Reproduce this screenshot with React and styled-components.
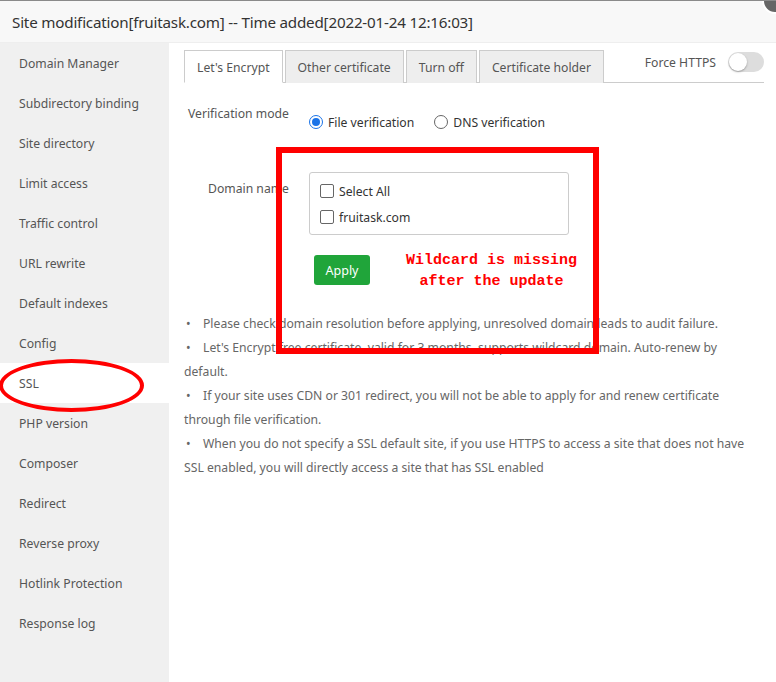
import React, { useState } from "react";
import styled, { createGlobalStyle } from "styled-components";

const GlobalStyle = createGlobalStyle`
  html, body {
    margin: 0;
    padding: 0;
    background: #fff;
    font-family: "Noto Sans", "Open Sans", Arial, sans-serif;
  }
  * { box-sizing: border-box; }
`;

const Layer = styled.div`
  position: relative;
  width: 776px;
  height: 682px;
  overflow: hidden;
  background: #fff;
  border-top: 1px solid #8a8a8a;
`;

const Header = styled.div`
  height: 42px;
  padding: 0 12px;
  display: flex;
  align-items: center;
  background: #f8f8f8;
  border-bottom: 1px solid #eee;
  font-size: 15.2px;
  color: #333;
  letter-spacing: -0.2px;
`;

const CloseBtn = styled.div`
  position: absolute;
  top: -13px;
  right: -12px;
  width: 26px;
  height: 26px;
  border-radius: 50%;
  background: #666;
  border: 2px solid #fff;
`;

const Body = styled.div`
  display: flex;
  height: 639px;
`;

const Sidebar = styled.ul`
  width: 169px;
  margin: 0;
  padding: 0;
  list-style: none;
  background: #f0f0f0;
`;

const NavItem = styled.li`
  height: 40px;
  padding: 1px 0 0 19px;
  line-height: 39px;
  font-size: 12.2px;
  color: #555;
  background: ${(p) => (p.$active ? "#fff" : "transparent")};
`;

const Main = styled.div`
  flex: 1;
  padding: 7px 12px 0 15px;
`;

const TabBar = styled.div`
  display: flex;
  align-items: flex-end;
  height: 33px;
  border-bottom: 1px solid #ccc;
  width: 580px;
  position: relative;
`;

const Tab = styled.div`
  height: 33px;
  line-height: 33px;
  padding: 0 12px;
  margin-right: 2px;
  font-size: 12.2px;
  color: #555;
  border: 1px solid #ccc;
  border-bottom: ${(p) => (p.$active ? "1px solid #fff" : "none")};
  background: ${(p) => (p.$active ? "#fff" : "#eee")};
  margin-bottom: -1px;
`;

const ForceBox = styled.div`
  position: absolute;
  right: 0;
  top: 2px;
  display: flex;
  align-items: center;
  gap: 12px;
  font-size: 12.2px;
  color: #555;
`;

const Switch = styled.div`
  width: 36px;
  height: 20px;
  border-radius: 10px;
  background: #ddd;
  position: relative;
  &::after {
    content: "";
    position: absolute;
    left: 1px;
    top: 1px;
    width: 18px;
    height: 18px;
    border-radius: 50%;
    background: #fff;
    box-shadow: 0 1px 2px rgba(0, 0, 0, 0.3);
  }
`;

const Form = styled.div`
  padding-top: 22px;
`;

const Row = styled.div`
  display: flex;
  align-items: flex-start;
  margin-bottom: ${(p) => p.$gap || 0}px;
`;

const Label = styled.div`
  width: ${(p) => (p.$auto ? "auto" : "105px")};
  margin-left: ${(p) => (p.$auto ? "4px" : "0")};
  text-align: right;
  font-size: 12.2px;
  color: #555;
  padding-top: ${(p) => p.$pt || 0}px;
`;

const RadioGroup = styled.div`
  display: flex;
  gap: 20px;
  margin-left: 20px;
  padding-top: 9px;
`;

const Option = styled.label`
  display: flex;
  align-items: center;
  gap: 5px;
  height: 16px;
  font-size: 12.2px;
  color: #333;
`;

const Radio = styled.span`
  width: 14px;
  height: 14px;
  border-radius: 50%;
  border: 1px solid ${(p) => (p.$on ? "#1a73e8" : "#666")};
  position: relative;
  &::after {
    content: "";
    display: ${(p) => (p.$on ? "block" : "none")};
    position: absolute;
    inset: 2px;
    border-radius: 50%;
    background: #1a73e8;
  }
`;

const DomainBox = styled.div`
  margin-left: 20px;
  width: 260px;
  height: 63px;
  border: 1px solid #ccc;
  border-radius: 3px;
  padding: 10px 10px;
  display: flex;
  flex-direction: column;
  gap: 10px;
`;

const Check = styled.span`
  width: 14px;
  height: 14px;
  border: 1px solid #666;
  border-radius: 2px;
`;

const ApplyRow = styled.div`
  display: flex;
  align-items: flex-start;
  padding-left: 130px;
  margin-top: 20px;
`;

const ApplyBtn = styled.button`
  width: 56px;
  height: 30px;
  border: none;
  border-radius: 3px;
  background: #20a53a;
  color: #fff;
  font-family: inherit;
  font-size: 12.5px;
`;

const Note = styled.div`
  margin-left: 36px;
  margin-top: -5px;
  font-family: "Liberation Mono", "DejaVu Sans Mono", monospace;
  font-weight: bold;
  font-size: 15px;
  line-height: 21px;
  color: #f00;
  text-align: center;
`;

const Tips = styled.ul`
  margin: 20px 0 0;
  padding: 0;
  list-style: none;
  font-size: 12.2px;
  line-height: 24px;
  color: #666;
  width: 570px;
`;

const Tip = styled.li`
  &::before {
    content: "•";
    display: inline-block;
    width: 17px;
    padding-left: 2px;
  }
`;

const RedRect = styled.div`
  position: absolute;
  left: 276px;
  top: 146px;
  width: 323px;
  height: 207px;
  border: 6px solid #f00;
  pointer-events: none;
`;

const RedOval = styled.div`
  position: absolute;
  left: -1px;
  top: 358px;
  width: 145px;
  height: 53px;
  border: 4px solid #f00;
  border-radius: 50%;
  pointer-events: none;
`;

const menu = [
  "Domain Manager",
  "Subdirectory binding",
  "Site directory",
  "Limit access",
  "Traffic control",
  "URL rewrite",
  "Default indexes",
  "Config",
  "SSL",
  "PHP version",
  "Composer",
  "Redirect",
  "Reverse proxy",
  "Hotlink Protection",
  "Response log",
];

const tabs = ["Let's Encrypt", "Other certificate", "Turn off", "Certificate holder"];

const tips = [
  "Please check domain resolution before applying, unresolved domain leads to audit failure.",
  "Let's Encrypt free certificate, valid for 3 months, supports wildcard domain. Auto-renew by default.",
  "If your site uses CDN or 301 redirect, you will not be able to apply for and renew certificate through file verification.",
  "When you do not specify a SSL default site, if you use HTTPS to access a site that does not have SSL enabled, you will directly access a site that has SSL enabled",
];

export default function App() {
  const [active, setActive] = useState("SSL");
  const [tab, setTab] = useState(0);

  return (
    <Layer>
      <GlobalStyle />
      <Header>Site modification[fruitask.com] -- Time added[2022-01-24 12:16:03]</Header>
      <CloseBtn />
      <Body>
        <Sidebar>
          {menu.map((m) => (
            <NavItem key={m} $active={m === active} onClick={() => setActive(m)}>
              {m}
            </NavItem>
          ))}
        </Sidebar>
        <Main>
          <TabBar>
            {tabs.map((t, i) => (
              <Tab key={t} $active={i === tab} onClick={() => setTab(i)}>
                {t}
              </Tab>
            ))}
            <ForceBox>
              Force HTTPS
              <Switch />
            </ForceBox>
          </TabBar>
          <Form>
            <Row $gap={42}>
              <Label $auto>Verification mode</Label>
              <RadioGroup>
                <Option>
                  <Radio $on />
                  File verification
                </Option>
                <Option>
                  <Radio />
                  DNS verification
                </Option>
              </RadioGroup>
            </Row>
            <Row>
              <Label $pt={8}>Domain name</Label>
              <DomainBox>
                <Option>
                  <Check />
                  Select All
                </Option>
                <Option>
                  <Check />
                  fruitask.com
                </Option>
              </DomainBox>
            </Row>
            <ApplyRow>
              <ApplyBtn>Apply</ApplyBtn>
              <Note>
                Wildcard is missing
                <br />
                after the update
              </Note>
            </ApplyRow>
          </Form>
          <Tips>
            {tips.map((t) => (
              <Tip key={t}>{t}</Tip>
            ))}
          </Tips>
        </Main>
      </Body>
      <RedRect />
      <RedOval />
    </Layer>
  );
}
